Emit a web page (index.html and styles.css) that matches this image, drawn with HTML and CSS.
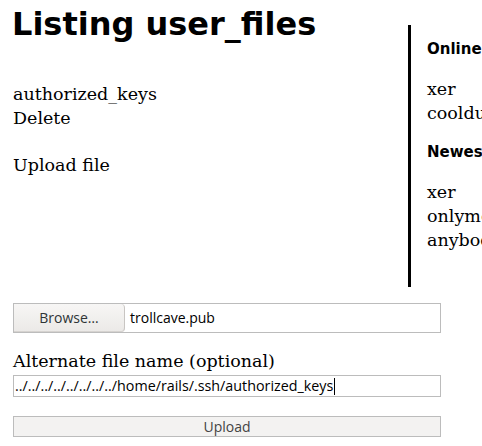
FILE: index.html
```html
<!DOCTYPE html>
<html>
<head>
<meta charset="utf-8">
<title>Listing user_files</title>
<link rel="stylesheet" href="styles.css">
</head>
<body>
<div class="page">
  <div class="top">
    <div class="main">
      <h1 class="title">Listing user_files</h1>
      <ul class="files">
        <li>authorized_keys</li>
        <li>Delete</li>
      </ul>
      <p class="upload-head">Upload file</p>
    </div>
    <aside class="sidebar">
      <h4 class="side-head">Online</h4>
      <ul class="side-list">
        <li>xer</li>
        <li>coolduc</li>
      </ul>
      <h4 class="side-head">Newest</h4>
      <ul class="side-list">
        <li>xer</li>
        <li>onlymod</li>
        <li>anybody</li>
      </ul>
    </aside>
  </div>
  <form class="form">
    <div class="file-input">
      <span class="browse">Browse…</span>
      <span class="file-name">trollcave.pub</span>
    </div>
    <label class="alt-label" for="alt">Alternate file name (optional)</label>
    <div class="text-input"><span class="text-value">../../../../../../../../home/rails/.ssh/authorized_keys</span><span class="caret"></span></div>
    <button type="button" class="upload-btn">Upload</button>
  </form>
</div>
</body>
</html>
```

FILE: styles.css
```css
html, body {
  margin: 0;
  padding: 0;
  overflow: hidden;
  background: #fff;
}
body {
  font-family: "DejaVu Serif", serif;
  font-size: 17.5px;
  line-height: 24px;
  color: #000;
}
.page {
  padding-left: 13px;
}
.top {
  display: flex;
}
.main {
  width: 395px;
  flex: none;
}
.title {
  margin: 0;
  padding-top: 6px;
  font-family: "DejaVu Sans", sans-serif;
  font-weight: bold;
  font-size: 32px;
  line-height: 37px;
  margin-left: -1px;
}
.files {
  list-style: none;
  margin: 39px 0 0 0;
  padding: 0;
}
.upload-head {
  margin: 23px 0 0 0;
}
.sidebar {
  flex: none;
  width: 200px;
  margin-top: 25px;
  border-left: 3px solid #000;
  padding: 16px 0 18px 16px;
  height: 228px;
}
.side-head {
  margin: 0;
  font-family: "DejaVu Sans", sans-serif;
  font-weight: bold;
  font-size: 15px;
  line-height: 16px;
}
.side-list {
  list-style: none;
  margin: 20px 0 19px 0;
  padding: 0;
}
.form {
  margin-top: 16px;
  width: 428px;
  display: flex;
  flex-direction: column;
  font-family: "Open Sans", sans-serif;
  font-size: 14px;
}
.file-input {
  box-sizing: border-box;
  height: 30px;
  border: 1px solid #bcbcbc;
  display: flex;
  align-items: stretch;
}
.browse {
  box-sizing: border-box;
  width: 111px;
  border-right: 1px solid #c8c5c2;
  border-radius: 0 4px 4px 0;
  background: linear-gradient(#f7f6f5, #ebe9e7);
  box-shadow: inset 0 -1px 0 #d6d3d0;
  color: #2e3436;
  display: flex;
  align-items: center;
  justify-content: center;
  font-size: 14px;
}
.file-name {
  display: flex;
  align-items: center;
  padding-left: 5px;
  color: #000;
}
.alt-label {
  margin-top: 16px;
  font-family: "DejaVu Serif", serif;
  font-size: 17.5px;
  line-height: 24px;
}
.text-input {
  box-sizing: border-box;
  margin-top: 2px;
  height: 22px;
  border: 1px solid #bcbcbc;
  padding-left: 1px;
  display: flex;
  align-items: center;
  color: #000;
  font-size: 14.3px;
  line-height: 18px;
}
.caret {
  display: inline-block;
  width: 1px;
  height: 17px;
  background: #000;
  margin-left: 1px;
}
.upload-btn {
  box-sizing: border-box;
  margin-top: 19px;
  height: 21px;
  width: 428px;
  border: 1px solid #bcbcbc;
  background: #f3f2f1;
  color: #444;
  font-family: "Open Sans", sans-serif;
  font-size: 14px;
  line-height: 17px;
  padding: 0;
  border-radius: 0;
}
```
